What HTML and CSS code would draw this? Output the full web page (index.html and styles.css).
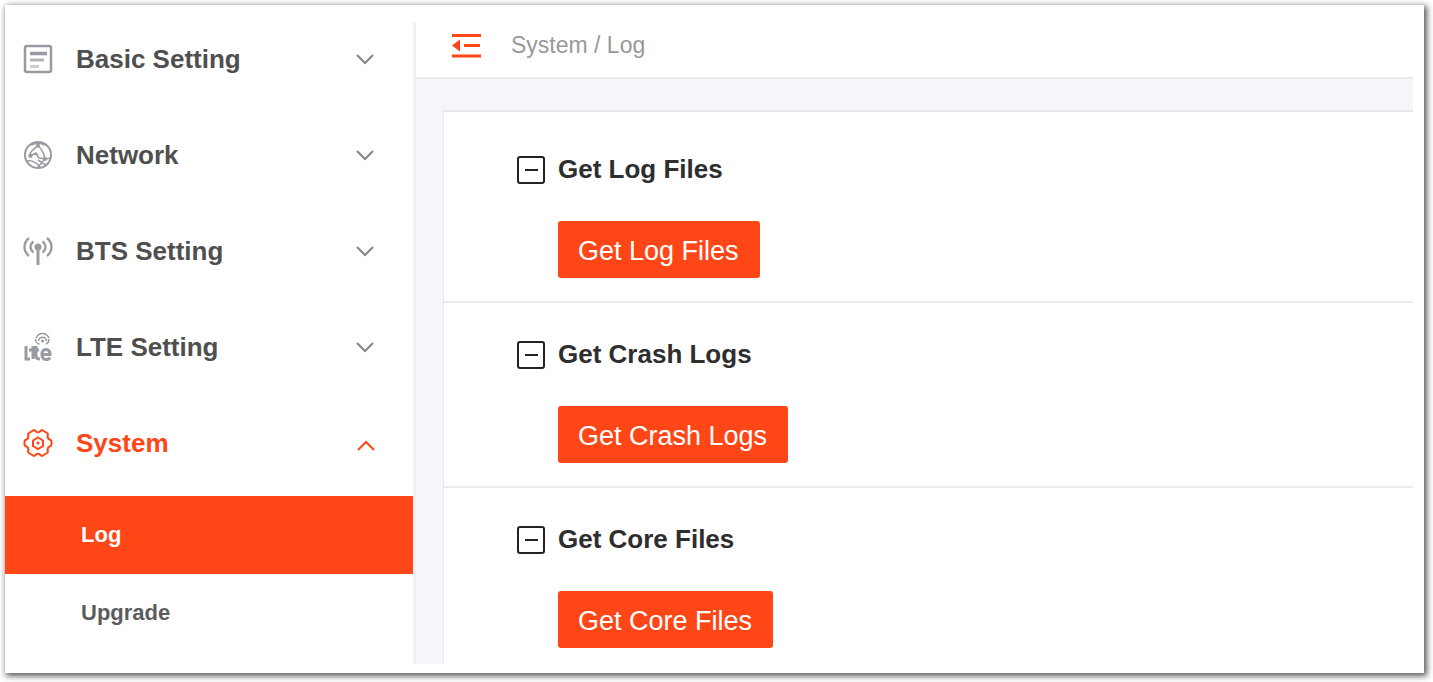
FILE: index.html
```html
<!DOCTYPE html>
<html lang="en">
<head>
<meta charset="utf-8">
<title>System / Log</title>
<link rel="stylesheet" href="styles.css">
</head>
<body>
<div class="frame">
  <nav class="sidebar" aria-label="Main menu">
    <button class="menu-item" type="button">
      <svg class="menu-icon" viewBox="0 0 30 30"><rect x="2" y="2" width="26" height="26" rx="2" stroke-width="2.500"/><path d="M7 9.500h17" stroke-width="3.500"/><path d="M7 16h14" stroke-width="3" opacity=".75"/><path d="M7 22.500h9" stroke-width="3" opacity=".5"/></svg>
      <span class="menu-label">Basic Setting</span>
      <svg class="chevron" viewBox="0 0 20 12"><path d="M2 2l8 8 8-8"/></svg>
    </button>
    <button class="menu-item" type="button">
      <svg class="menu-icon thin" viewBox="0 0 30 30"><circle cx="15" cy="15" r="13" stroke-width="2"/><path d="M8 5c4-2 10-2 14 0M15 6C11 8 6 13 6 17M15 6c4 3 6 8 7 13M7 16l6-3 3 5M16 18l6 1 6-1M22 19l-7 8M4 21c5-1 9 1 13 6M15 20l8 5"/><circle cx="15" cy="5.500" r="2" class="solid"/><circle cx="7.500" cy="16" r="2" class="solid"/><circle cx="22" cy="19" r="2" class="solid"/></svg>
      <span class="menu-label">Network</span>
      <svg class="chevron" viewBox="0 0 20 12"><path d="M2 2l8 8 8-8"/></svg>
    </button>
    <button class="menu-item" type="button">
      <svg class="menu-icon" viewBox="0 0 30 30"><path d="M6 2C0 7 0 15 6 20M10.500 5.500c-4 3-4 8 0 11M24 2c6 5 6 13 0 18M19.500 5.500c4 3 4 8 0 11" stroke-width="2.300"/><path d="M15 12v17" stroke-width="3"/><circle cx="15" cy="11" r="3.500" class="solid"/></svg>
      <span class="menu-label">BTS Setting</span>
      <svg class="chevron" viewBox="0 0 20 12"><path d="M2 2l8 8 8-8"/></svg>
    </button>
    <button class="menu-item" type="button">
      <svg class="menu-icon" viewBox="0 0 30 30"><path class="thin" d="M13 6c3-6 10-6 13 0M15.500 9c1-5 7-5 8 0M12.500 7c0 3 2 5 4 5M26 7c0 3-1 4-3 5"/><circle cx="19.500" cy="9" r="1.500" class="solid"/><path class="heavy" d="M3 14v13h4M10 14v13M6 18h10M13 14v10q0 3 4 3M19 22.500h8q0-5-4-5t-4 5 4 5q3 0 4-2"/></svg>
      <span class="menu-label">LTE Setting</span>
      <svg class="chevron" viewBox="0 0 20 12"><path d="M2 2l8 8 8-8"/></svg>
    </button>
    <button class="menu-item open" type="button" aria-expanded="true">
      <svg class="menu-icon" viewBox="0 0 30 30"><path d="M10 2.500q2-1 3 1 2 1.500 4 0 1-2 3-1l4 2.500q1.500 1 .5 3 0 2.500 2 3.500 2 .5 2 2v3q0 1.500-2 2-2 1-2 3.500 1 2-.5 3l-4 2.500q-2 1-3-1-2-1.500-4 0-1 2-3 1l-4-2.500q-1.500-1-.5-3 0-2.500-2-3.500-2-.5-2-2v-3q0-1.500 2-2 2-1 2-3.500-1-2 .5-3z"/><path d="M15 9.500l5 3v5.500l-5 3-5-3v-5.500z"/><circle cx="15" cy="15" r="1.500" class="solid"/></svg>
      <span class="menu-label">System</span>
      <svg class="chevron" viewBox="0 0 20 12"><path d="M3 11l8-8 8 8"/></svg>
    </button>
    <a class="sub-item active" href="#log" aria-current="page">Log</a>
    <a class="sub-item" href="#upgrade">Upgrade</a>
  </nav>
  <div class="content">
    <header class="topbar">
      <button class="fold" type="button" aria-label="Collapse menu">
        <svg viewBox="0 0 30 26"><path d="M0 2.500h29M12 12.500h16M0 23h29"/><path class="arrow" d="M0 12.500l8-6v12z"/></svg>
      </button>
      <span class="crumbs">System / Log</span>
    </header>
    <main class="card">
      <section class="group">
        <h2><button class="toggle" type="button" aria-expanded="true"><svg viewBox="0 0 30 30"><rect x="2" y="2" width="26" height="26" rx="2"/><path d="M9 15h13"/></svg>Get Log Files</button></h2>
        <button class="action" type="button">Get Log Files</button>
      </section>
      <section class="group">
        <h2><button class="toggle" type="button" aria-expanded="true"><svg viewBox="0 0 30 30"><rect x="2" y="2" width="26" height="26" rx="2"/><path d="M9 15h13"/></svg>Get Crash Logs</button></h2>
        <button class="action" type="button">Get Crash Logs</button>
      </section>
      <section class="group">
        <h2><button class="toggle" type="button" aria-expanded="true"><svg viewBox="0 0 30 30"><rect x="2" y="2" width="26" height="26" rx="2"/><path d="M9 15h13"/></svg>Get Core Files</button></h2>
        <button class="action" type="button">Get Core Files</button>
      </section>
    </main>
  </div>
</div>
</body>
</html>
```

FILE: styles.css
```css
* {
  box-sizing: border-box;
}

body {
  margin: 0;
  height: 100vh;
  padding: 5px 9px 9px 5px;
  background: #fff;
  font-family: "Liberation Sans", Arial, sans-serif;
  overflow: hidden;
}

button {
  border: 0;
  padding: 0;
  background: none;
  font-family: inherit;
  cursor: pointer;
}

svg {
  display: block;
  flex: none;
  fill: none;
  stroke: currentColor;
}

.frame {
  display: flex;
  height: 100%;
  padding-right: 11px;
  background: #fff;
  box-shadow: 2px 2px 6px 1px rgba(0, 0, 0, 0.65);
}

.sidebar {
  display: flex;
  flex: none;
  flex-direction: column;
  width: 408px;
  padding-top: 6px;
}

.menu-item {
  display: flex;
  flex: none;
  align-items: center;
  height: 96px;
  padding: 0 38px 0 18px;
  color: #4f4f4f;
  font-size: 26px;
  font-weight: 700;
  text-align: left;
}

.menu-icon {
  width: 30px;
  height: 30px;
  margin-right: 23px;
  color: #989ba1;
  stroke-width: 2;
}

.thin {
  stroke-width: 1.5;
}

.heavy {
  stroke-width: 3;
}

.solid {
  fill: currentColor;
  stroke: none;
}

.menu-label {
  flex: 1;
}

.chevron {
  width: 20px;
  height: 12px;
  color: #858585;
  stroke-width: 2;
}

.open,
.open svg {
  color: #ff4617;
}

.open .chevron {
  margin-top: 3px;
}

.sub-item {
  display: flex;
  flex: none;
  align-items: center;
  height: 78px;
  padding-left: 76px;
  color: #5c5c5c;
  font-size: 22px;
  font-weight: 700;
  text-decoration: none;
}

.active {
  margin-top: 5px;
  background: #ff4617;
  color: #fff;
}

.content {
  display: flex;
  flex: 1;
  flex-direction: column;
  min-width: 0;
  margin: 17px 0 9px;
  border-left: 3px solid #f2f2f3;
  background: #f5f6fa;
}

.topbar {
  display: flex;
  flex: none;
  align-items: center;
  gap: 29px;
  height: 57px;
  padding: 0 36px 8px;
  border-bottom: 2px solid #ebebeb;
  background: #fff;
}

.fold svg {
  width: 30px;
  height: 26px;
  color: #ff4617;
  stroke-width: 3;
}

.fold .arrow {
  fill: currentColor;
  stroke: none;
}

.crumbs {
  color: #999;
  font-size: 23px;
}

.card {
  flex: 1;
  min-height: 0;
  margin: 31px 0 0 27px;
  padding-top: 6px;
  border-top: 2px solid #e8e8e8;
  border-left: 1px solid #e8e8e8;
  background: #fff;
  overflow: hidden;
}

.group {
  padding: 37px 0 23px 72px;
  border-bottom: 2px solid #ebebeb;
}

.group h2 {
  margin: 0 0 37px;
}

.toggle {
  display: flex;
  align-items: center;
  gap: 12px;
  height: 29px;
  color: #2e2e2e;
  font-size: 26px;
  font-weight: 700;
}

.toggle svg {
  width: 30px;
  height: 30px;
  color: #222;
  stroke-width: 2;
}

.action {
  display: block;
  height: 57px;
  margin-left: 42px;
  padding: 3px 21px 0 20px;
  border-radius: 3px;
  background: #ff4617;
  color: #fff;
  font-size: 27px;
}
```
